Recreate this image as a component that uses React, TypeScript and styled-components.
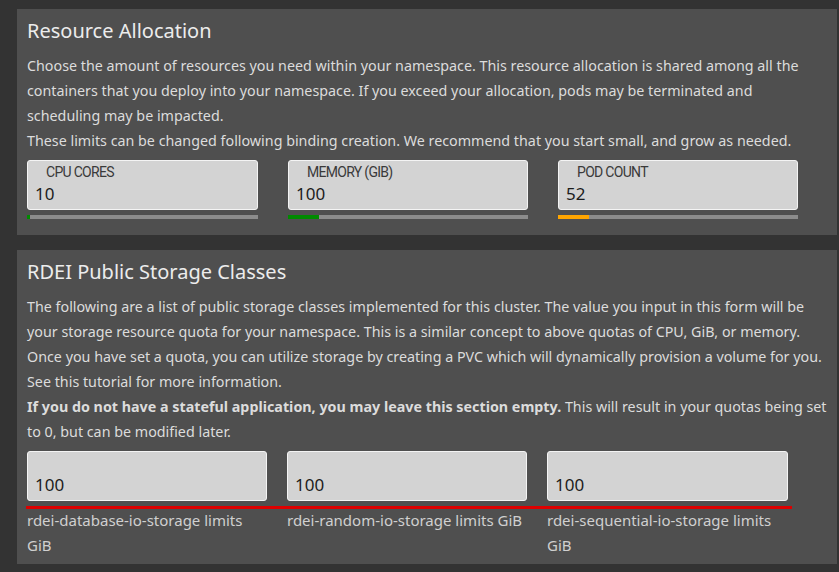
import React from "react";
import styled, { createGlobalStyle } from "styled-components";

const GlobalStyle = createGlobalStyle`
    body {
        margin: 0;
        background: #333333;
        font-family: "Noto Sans", "Open Sans", sans-serif;
    }
`;

type Quota = {
    label: string;
    value: string;
    percent: number;
    color: string;
    width: number;
};

const quotas: Quota[] = [
    { label: "CPU CORES", value: "10", percent: 1.3, color: "#008a00", width: 231 },
    { label: "MEMORY (GIB)", value: "100", percent: 13, color: "#008a00", width: 240 },
    { label: "POD COUNT", value: "52", percent: 13, color: "#ffa500", width: 240 },
];

const storage = [
    "rdei-database-io-storage limits GiB",
    "rdei-random-io-storage limits GiB",
    "rdei-sequential-io-storage limits GiB",
];

const Page = styled.div`
    display: flex;
    flex-direction: column;
    gap: 15px;
    padding: 9px 2px 8px 17px;
`;

const Panel = styled.section<{ $bottom: number }>`
    background: #4f4f4f;
    padding: 8px 10px ${(p) => p.$bottom}px 10px;
`;

const Title = styled.h2`
    margin: 0 0 8px 0;
    font-size: 20px;
    line-height: 28px;
    font-weight: 400;
    color: #ececec;
`;

const Text = styled.p`
    margin: 0;
    max-width: 800px;
    font-size: 14.3px;
    line-height: 25px;
    color: #dcdcdc;
`;

const QuotaRow = styled.div`
    display: flex;
    gap: 30px;
    margin-top: 7px;
`;

const QuotaField = styled.div<{ $width: number }>`
    width: ${(p) => p.$width}px;
    display: flex;
    flex-direction: column;
    gap: 5px;
`;

const InputBox = styled.div`
    box-sizing: border-box;
    height: 50px;
    background: #d3d3d3;
    border: 1px solid #f4f4f4;
    border-radius: 3px;
    padding: 2px 7px 0 7px;
    display: flex;
    flex-direction: column;
    justify-content: flex-end;
`;

const InputLabel = styled.div`
    font-family: Roboto, sans-serif;
    font-size: 14px;
    letter-spacing: -0.7px;
    line-height: 18px;
    color: #3a3a3a;
    padding-left: 11px;
`;

const InputValue = styled.div`
    font-size: 17px;
    line-height: 26px;
    color: #1c1c1c;
    padding-bottom: 2px;
`;

const Bar = styled.div`
    height: 4px;
    background: #8c8c8c;
    display: flex;
`;

const BarFill = styled.div<{ $color: string }>`
    background: ${(p) => p.$color};
    height: 100%;
`;

const StorageGrid = styled.div`
    display: grid;
    grid-template-columns: 240px 240px 241px;
    column-gap: 20px;
    margin-top: 7px;
`;

const StorageInputs = styled(StorageGrid)`
    width: 766px;
    margin-left: -1px;
    padding-left: 1px;
    box-sizing: border-box;
    padding-bottom: 5px;
    border-bottom: 3px solid #dd0000;
`;

const StorageLabels = styled(StorageGrid)`
    margin-top: -1px;
`;

const StorageLabel = styled.div`
    font-size: 15px;
    line-height: 25px;
    color: #d0d0d0;
`;

export default function App(): JSX.Element {
    return (
        <>
            <GlobalStyle />
            <Page>
                <Panel $bottom={16}>
                    <Title>Resource Allocation</Title>
                    <Text>
                        Choose the amount of resources you need within your namespace. This resource allocation is
                        shared among all the containers that you deploy into your namespace. If you exceed your
                        allocation, pods may be terminated and scheduling may be impacted.
                    </Text>
                    <Text>
                        These limits can be changed following binding creation. We recommend that you start small,
                        and grow as needed.
                    </Text>
                    <QuotaRow>
                        {quotas.map((q) => (
                            <QuotaField key={q.label} $width={q.width}>
                                <InputBox>
                                    <InputLabel>{q.label}</InputLabel>
                                    <InputValue>{q.value}</InputValue>
                                </InputBox>
                                <Bar>
                                    <BarFill $color={q.color} style={{ width: `${q.percent}%` }} />
                                </Bar>
                            </QuotaField>
                        ))}
                    </QuotaRow>
                </Panel>
                <Panel $bottom={6}>
                    <Title>RDEI Public Storage Classes</Title>
                    <Text>
                        The following are a list of public storage classes implemented for this cluster. The value
                        you input in this form will be your storage resource quota for your namespace. This is a
                        similar concept to above quotas of CPU, GiB, or memory. Once you have set a quota, you can
                        utilize storage by creating a PVC which will dynamically provision a volume for you.
                    </Text>
                    <Text>See this tutorial for more information.</Text>
                    <Text>
                        <b>If you do not have a stateful application, you may leave this section empty.</b> This
                        will result in your quotas being set to 0, but can be modified later.
                    </Text>
                    <StorageInputs>
                        {storage.map((s) => (
                            <InputBox key={s}>
                                <InputValue>100</InputValue>
                            </InputBox>
                        ))}
                    </StorageInputs>
                    <StorageLabels>
                        {storage.map((s) => (
                            <StorageLabel key={s}>{s}</StorageLabel>
                        ))}
                    </StorageLabels>
                </Panel>
            </Page>
        </>
    );
}
